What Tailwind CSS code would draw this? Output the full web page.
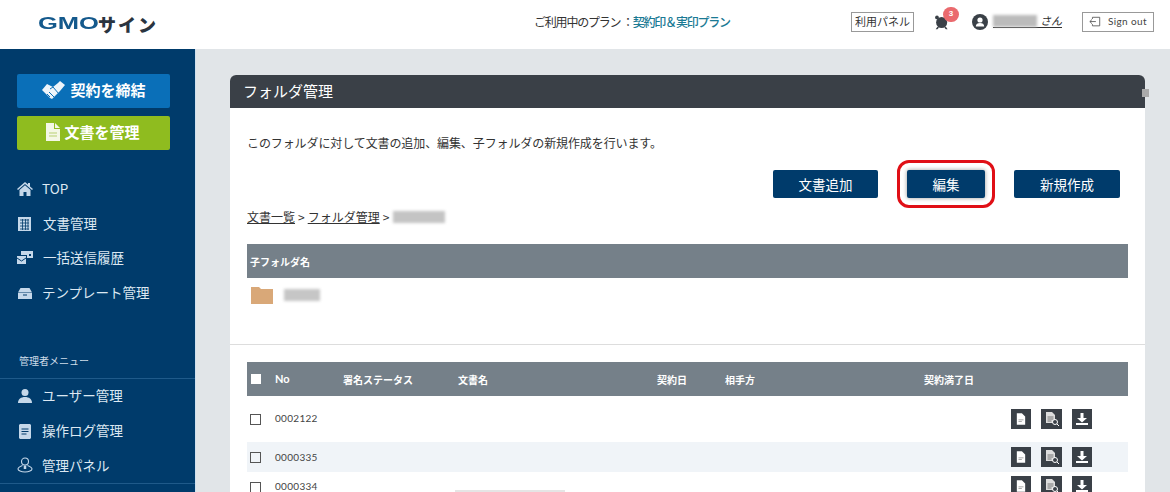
<!DOCTYPE html>
<html lang="ja">
<head>
  <meta charset="UTF-8">
  <title>フォルダ管理</title>
  <script src="https://cdn.jsdelivr.net/npm/@tailwindcss/browser@4"></script>
</head>
<body class="h-[492px] overflow-hidden bg-[#e1e5e8] text-[#333] font-['Noto_Sans_CJK_JP','Noto_Sans',sans-serif]">
  <!-- header -->
  <header class="h-[49px] bg-white flex items-center pb-[6px]">
    <div class="w-[496px] pl-[38px] pt-[4px] flex items-center font-bold leading-none">
      <span class="text-[17px] text-[#14598c] font-['Liberation_Sans',sans-serif] scale-x-150 origin-left w-[60px]">GMO</span>
      <span class="text-[18px] text-[#2a3440] font-black tracking-[2px]">サイン</span>
    </div>
    <div class="w-[355px] pl-[38px] text-[12px] tracking-[-1.200px] whitespace-nowrap">ご利用中のプラン ：<span class="text-[#1a7a94] font-medium">契約印＆実印プラン</span></div>
    <a class="w-[63px] h-[20px] border border-[#999] flex items-center justify-center text-[11px]">利用パネル</a>
    <div class="relative w-[20px] ml-[20px] h-[20px]">
      <svg viewBox="0 0 20 20" class="w-[17px] h-[17px] absolute left-0 top-[2px]" fill="#3a4047"><circle cx="9" cy="10" r="6.500"/><circle cx="3.500" cy="4" r="2.200"/><circle cx="14.500" cy="4" r="2.200"/><path d="M4 15l-2 3h2l2-2zM14 15l2 3h-2l-2-2z"/></svg>
      <span class="absolute left-[9px] top-[-5px] w-[16px] h-[15px] rounded-full bg-[#ea6a6e] text-white text-[8px] font-bold flex items-center justify-center font-['Liberation_Sans',sans-serif]">3</span>
    </div>
    <svg viewBox="0 0 16 16" class="w-[16px] h-[16px] ml-[18px]"><circle cx="8" cy="8" r="8" fill="#3a4047"/><circle cx="8" cy="6" r="2.600" fill="#fff"/><path d="M3.800 12.400c0-2.400 1.800-3.500 4.200-3.500s4.200 1.100 4.200 3.500z" fill="#fff"/></svg>
    <div class="ml-[5px] flex items-end border-b border-[#333] h-[13px] w-[69px] justify-end">
      <span class="absolute left-[993px] top-[15px] w-[44px] h-[12px] bg-[#bbb] blur-[1.500px]"></span>
      <span class="text-[11px] leading-[13px] italic">さん</span>
    </div>
    <a class="ml-[20px] w-[72px] h-[20px] border border-[#999] flex items-center justify-center gap-[7px] text-[10px] text-[#444] font-['Lato',sans-serif] tracking-[0.4px]">
      <svg viewBox="0 0 14 14" class="w-[12px] h-[12px]" fill="none" stroke="#555"><path d="M4 3.500V1.500h8.500v10H4v-2M8 6.500H1M3.500 4L1 6.500 3.500 9"/></svg>
      Sign out
    </a>
  </header>

  <div class="flex h-[443px]">
    <!-- sidebar -->
    <aside class="w-[196px] shrink-0 bg-[#003b6b] text-[#dce8f2] text-[13.500px] border-r border-[#cfe0ee]">
      <div class="pl-[17px] pr-[25px] pt-[25px] flex flex-col gap-[8px] text-[15px]">
        <a class="h-[34px] pb-[2px] rounded-[2px] bg-[#0a6fb8] text-white font-bold flex items-center justify-center gap-[5px]">
          <svg viewBox="0 0 24 20" class="w-[24px] h-[20px]" fill="#eef4fa"><path d="M1 10l5-6 6 3 5-4 2-2 5 4-5 6-8 8-2-1-4-4z"/><path d="M9 9l3-2 6 7M8 12l5 5M6 14l3 3" stroke="#0a6fb8" fill="none"/></svg>
          契約を締結
        </a>
        <a class="h-[34px] pb-[2px] rounded-[2px] bg-[#8fbc1f] text-white font-bold flex items-center justify-center gap-[4px] pr-[1px]">
          <svg viewBox="0 0 14 18" class="w-[14px] h-[18px]"><path d="M0 0h8v6h6v12H0z" fill="#f4f7e6"/><path d="M9 0l5 5H9z" fill="#f4f7e6"/><path d="M3 10h8M3 13h8" stroke="#b7cf72"/></svg>
          文書を管理
        </a>
      </div>
      <nav class="mt-[21px] flex flex-col">
        <a class="h-[35px] pl-[17px] flex items-center gap-[9px]">
          <svg viewBox="0 0 16 14" class="w-[16px] h-[14px]" fill="#c5d8ea"><path d="M8 0L0 7l1 1 7-6 7 6 1-1-3-2.600V1h-2v1.600z"/><path d="M2.500 8L8 3.200 13.500 8v6H9.500v-4h-3v4H2.500z"/></svg>
          <span>TOP</span>
        </a>
        <a class="h-[35px] pl-[17px] flex items-center gap-[10px]">
          <svg viewBox="0 0 16 14" class="w-[16px] h-[14px]"><rect x="1" width="13" height="14" fill="#c5d8ea"/><path d="M3 3h9M3 6h9M3 9h9M3 12h9M5.500 2v11M8.500 2v11M11 2v11" stroke="#003b6b" stroke-width=".8"/></svg>
          <span>文書管理</span>
        </a>
        <a class="h-[34px] pb-[2px] pl-[17px] flex items-center gap-[10px]">
          <svg viewBox="0 0 16 14" class="w-[16px] h-[14px]" fill="#c5d8ea"><path d="M4 1h12v7H10V5H4z"/><path d="M12 4h2v2h-2z" fill="#003b6b"/><path d="M0 6h9v8H0z"/><path d="M0 8l4.500 3L9 8" stroke="#003b6b" fill="none"/></svg>
          <span>一括送信履歴</span>
        </a>
        <a class="h-[35px] pl-[17px] flex items-center gap-[9px]">
          <svg viewBox="0 0 16 14" class="w-[16px] h-[14px]" fill="#c5d8ea"><path d="M3.500 2h9L15 6.500H1z"/><path d="M1 7h14v6H1z"/><path d="M6 9h4" stroke="#003b6b"/></svg>
          <span>テンプレート管理</span>
        </a>
      </nav>
      <div class="mt-[44px] pl-[19px] text-[10px] leading-[14px] text-[#cfdde9]">管理者メニュー</div>
      <div class="mt-[10px] border-t border-[#1f5a8a]">
        <a class="h-[35px] pb-[2px] pl-[17px] flex items-center gap-[9px]">
          <svg viewBox="0 0 16 14" class="w-[16px] h-[14px]" fill="#c5d8ea"><circle cx="8" cy="3.500" r="3.500"/><path d="M1 14c0-4 3-6 7-6s7 2 7 6z"/></svg>
          <span>ユーザー管理</span>
        </a>
        <a class="h-[35px] pb-[2px] pl-[17px] flex items-center gap-[9px]">
          <svg viewBox="0 0 16 16" class="w-[16px] h-[16px]"><path d="M3 1h10l1 1v13l-1 1H3l-1-1V2z" fill="#c5d8ea"/><path d="M4.500 6h7M4.500 8.500h7M4.500 11h5" stroke="#003b6b"/></svg>
          <span>操作ログ管理</span>
        </a>
        <a class="h-[35px] pb-[2px] pl-[17px] flex items-center gap-[9px] border-b border-[#1f5a8a]">
          <svg viewBox="0 0 16 16" class="w-[16px] h-[16px]" fill="none" stroke="#c5d8ea" stroke-width="1.100"><circle cx="8" cy="4.500" r="3.500"/><path d="M5.500 8.500C3 9.500 1 10.500 1 12c0 1.500 3 3 7 3s7-1.500 7-3c0-1.500-2-2.500-4.500-3.500"/><path d="M8 8.500v3.500" stroke-width="2.500"/></svg>
          <span>管理パネル</span>
        </a>
      </div>
    </aside>

    <!-- main -->
    <main class="flex-1 pl-[34px] pr-[25px] pt-[26px]">
      <section class="relative bg-white h-[417px] rounded-t-[6px]">
        <h1 class="h-[33px] pl-[13px] rounded-t-[6px] bg-[#3a4047] text-white text-[15px] leading-[32px] font-normal">フォルダ管理</h1>
        <span class="absolute right-[-4px] top-[14px] w-[7px] h-[8px] bg-[#aaa]"></span>
        <div class="px-[17px]">
          <p class="mt-[26px] text-[12px] leading-[18px] tracking-[-0.1px]">このフォルダに対して文書の追加、編集、子フォルダの新規作成を行います。</p>
          <div class="mt-[18px] flex justify-end pr-[8px] gap-[29px] text-[13.500px]">
            <button class="w-[105px] h-[28px] rounded-[2px] bg-[#003b6b] text-white">文書追加</button>
            <button class="w-[78px] h-[28px] rounded-[2px] bg-[#003b6b] text-white outline-[3px] outline-[#e00f16] outline-offset-[7px] shadow-[0_0_4px_#999]">編集</button>
            <button class="w-[106px] h-[28px] rounded-[2px] bg-[#003b6b] text-white">新規作成</button>
          </div>
          <div class="mt-[9px] h-[20px] flex items-center text-[12px] gap-[3px]">
            <a class="underline">文書一覧</a><span>&gt;</span><a class="underline">フォルダ管理</a><span>&gt;</span>
            <span class="ml-[1px] w-[52px] h-[12px] bg-[#c4c4c4] blur-[1.500px]"></span>
          </div>
          <div class="mt-[17px] h-[34px] bg-[#758089] text-white text-[10px] font-bold flex items-center pl-[3px]">子フォルダ名</div>
          <div class="h-[33px] flex items-center pl-[4px] gap-[11px]">
            <svg viewBox="0 0 22 18" class="w-[22px] h-[18px]"><path d="M0 1h8l2 2h12v15H0z" fill="#d9a878"/></svg>
            <span class="w-[36px] h-[12px] bg-[#c6c6c6] blur-[1.500px]"></span>
          </div>
        </div>
        <hr class="mt-[33px] border-[#ddd]">
        <div class="px-[17px] pt-[17px]">
          <div class="h-[34px] bg-[#758089] text-white text-[10px] font-bold grid grid-cols-[28px_68px_115px_199px_68px_199px_1fr] items-center">
            <span class="pl-[4px]"><span class="block w-[10px] h-[10px] bg-white"></span></span>
            <span class="font-['Lato',sans-serif] text-[11px]">No</span>
            <span>署名ステータス</span><span>文書名</span><span>契約日</span><span>相手方</span><span>契約満了日</span>
          </div>
          <div class="h-[46px] grid grid-cols-[28px_736px_1fr] items-center text-[10px] text-[#444] font-['Lato',sans-serif]">
            <span class="pl-[3px]"><span class="block w-[11px] h-[11px] border border-[#555]"></span></span>
            <span class="tracking-[0.3px] -translate-y-px">0002122</span>
            <span class="flex gap-[10px]">
              <a class="w-[20px] h-[20px] bg-[#3a4047] flex items-center justify-center"><svg viewBox="0 0 12 14" class="w-[10px] h-[12px]"><path d="M1 0h6l4 4v10H1z" fill="#fff"/><path d="M3 8h6M3 10h4" stroke="#999"/></svg></a>
              <a class="w-[21px] h-[20px] bg-[#3a4047] flex items-center justify-center"><svg viewBox="0 0 16 14" class="w-[16px] h-[14px]"><path d="M2 0h6l3 3v8H2z" fill="#ddd"/><path d="M3.500 5h6M3.500 7h6M3.500 9h4" stroke="#777"/><circle cx="11" cy="10" r="2.500" fill="#3a4047" stroke="#fff"/><path d="M13 12l2 2" stroke="#fff"/></svg></a>
              <a class="w-[20px] h-[20px] bg-[#3a4047] flex items-center justify-center"><svg viewBox="0 0 12 14" class="w-[12px] h-[14px]" fill="#fff"><path d="M4.500 1h3v5H11L6 10.500 1 6h3.500z"/><path d="M0 11h12v2H0z"/></svg></a>
            </span>
          </div>
          <div class="h-[30px] bg-[#f0f4f8] grid grid-cols-[28px_736px_1fr] items-center text-[10px] text-[#444] font-['Lato',sans-serif]">
            <span class="pl-[3px]"><span class="block w-[11px] h-[11px] border border-[#555]"></span></span>
            <span class="tracking-[0.3px]">0000335</span>
            <span class="flex gap-[10px]">
              <a class="w-[20px] h-[20px] bg-[#3a4047] flex items-center justify-center"><svg viewBox="0 0 12 14" class="w-[10px] h-[12px]"><path d="M1 0h6l4 4v10H1z" fill="#fff"/><path d="M3 8h6M3 10h4" stroke="#999"/></svg></a>
              <a class="w-[21px] h-[20px] bg-[#3a4047] flex items-center justify-center"><svg viewBox="0 0 16 14" class="w-[16px] h-[14px]"><path d="M2 0h6l3 3v8H2z" fill="#ddd"/><path d="M3.500 5h6M3.500 7h6M3.500 9h4" stroke="#777"/><circle cx="11" cy="10" r="2.500" fill="#3a4047" stroke="#fff"/><path d="M13 12l2 2" stroke="#fff"/></svg></a>
              <a class="w-[20px] h-[20px] bg-[#3a4047] flex items-center justify-center"><svg viewBox="0 0 12 14" class="w-[12px] h-[14px]" fill="#fff"><path d="M4.500 1h3v5H11L6 10.500 1 6h3.500z"/><path d="M0 11h12v2H0z"/></svg></a>
            </span>
          </div>
          <div class="h-[30px] grid grid-cols-[28px_736px_1fr] text-[10px] text-[#444] font-['Lato',sans-serif] pt-[4px]">
            <span class="pl-[3px] pt-[6px]"><span class="block w-[11px] h-[11px] border border-[#555]"></span></span>
            <span class="tracking-[0.3px] leading-[18px] pt-[1px]">0000334
              <span class="absolute left-[225px] top-[415px] w-[110px] h-[2px] bg-[#e5e5e5]"></span>
            </span>
            <span class="flex gap-[10px]">
              <a class="w-[20px] h-[20px] bg-[#3a4047] flex items-center justify-center"><svg viewBox="0 0 12 14" class="w-[10px] h-[12px]"><path d="M1 0h6l4 4v10H1z" fill="#fff"/><path d="M3 8h6M3 10h4" stroke="#999"/></svg></a>
              <a class="w-[21px] h-[20px] bg-[#3a4047] flex items-center justify-center"><svg viewBox="0 0 16 14" class="w-[16px] h-[14px]"><path d="M2 0h6l3 3v8H2z" fill="#ddd"/><path d="M3.500 5h6M3.500 7h6M3.500 9h4" stroke="#777"/><circle cx="11" cy="10" r="2.500" fill="#3a4047" stroke="#fff"/><path d="M13 12l2 2" stroke="#fff"/></svg></a>
              <a class="w-[20px] h-[20px] bg-[#3a4047] flex items-center justify-center"><svg viewBox="0 0 12 14" class="w-[12px] h-[14px]" fill="#fff"><path d="M4.500 1h3v5H11L6 10.500 1 6h3.500z"/><path d="M0 11h12v2H0z"/></svg></a>
            </span>
          </div>
        </div>
      </section>
    </main>
  </div>
</body>
</html>
